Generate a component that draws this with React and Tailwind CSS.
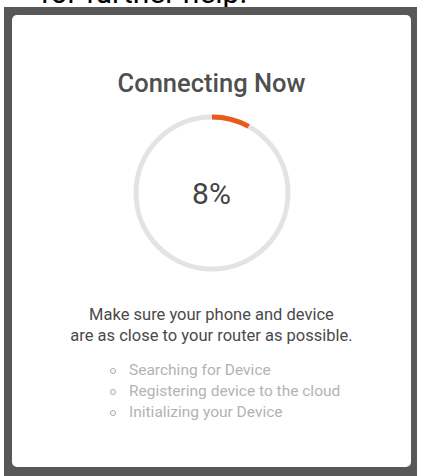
const steps = ['Searching for Device', 'Registering device to the cloud', 'Initializing your Device'];

const ProgressRing = ({ percent }) => {
  const r = 76;
  const c = 2 * Math.PI * r;
  return (
    <div className="relative w-[160px] h-[160px]">
      <svg width="160" height="160" viewBox="0 0 160 160">
        <circle cx="80" cy="80" r={r} fill="none" stroke="#e3e3e3" strokeWidth="5" />
        <circle
          cx="80"
          cy="80"
          r={r}
          fill="none"
          stroke="#ea5a1a"
          strokeWidth="5"
          strokeDasharray={`${(c * percent) / 100} ${c}`}
          transform="rotate(-90 80 80)"
        />
      </svg>
      <div className="absolute inset-0 flex items-center justify-center text-[30px] text-[#444] font-normal">
        {percent}%
      </div>
    </div>
  );
};

export default function App() {
  return (
    <div className="w-[421px] h-[476px] bg-white overflow-hidden font-['Roboto',sans-serif]">
      {/* tail of the previous paragraph, scrolled mostly out of view */}
      <div className="h-[7px] overflow-hidden">
        <div className="ml-[40px] -mt-[24px] text-[30px] leading-[34px] text-black">for further help.</div>
      </div>

      <div className="ml-[4px] w-[413px] h-[480px] bg-[#585858] pt-[8px] pl-[8px] pr-[6px]">
        <div className="h-[452px] bg-white rounded-[5px] pt-[54px] flex flex-col items-center">
          <h1 className="text-[25.5px] leading-[28px] font-medium text-[#4f4f4f]">Connecting Now</h1>

          <div className="mt-[16px]">
            <ProgressRing percent={8} />
          </div>

          <p className="mt-[31px] text-[16.5px] leading-[21px] text-[#4a4a4a] text-center">
            Make sure your phone and device
            <br />
            are as close to your router as possible.
          </p>

          <ul className="mt-[14px] self-start ml-[98px] text-[15.5px] leading-[21px] text-[#b3b3b3]">
            {steps.map((s) => (
              <li key={s} className="flex items-center gap-[13px]">
                <span className="w-[6px] h-[6px] rounded-full border border-[#a8a8a8]"></span>
                {s}
              </li>
            ))}
          </ul>
        </div>
      </div>
    </div>
  );
}
